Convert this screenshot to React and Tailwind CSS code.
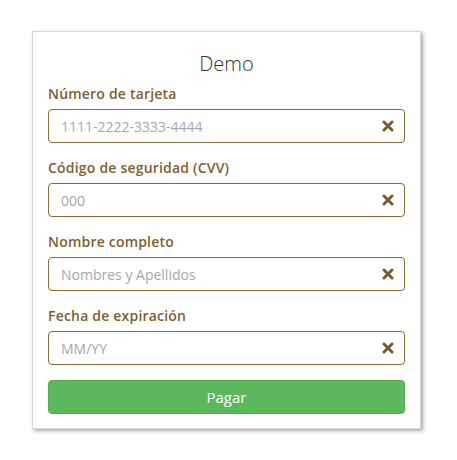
import React from 'react';

const fields = [
    { label: 'Número de tarjeta', placeholder: '1111-2222-3333-4444' },
    { label: 'Código de seguridad (CVV)', placeholder: '000' },
    { label: 'Nombre completo', placeholder: 'Nombres y Apellidos' },
    { label: 'Fecha de expiración', placeholder: 'MM/YY' },
];

const ClearIcon = () => (
    <svg width="12" height="12" viewBox="0 0 12 12" className="text-[#7a5a2a]">
        <path d="M2 2 L10 10 M10 2 L2 10" stroke="currentColor" strokeWidth="3" strokeLinecap="round" />
    </svg>
);

const Field = ({ label, placeholder }) => (
    <div className="flex flex-col">
        <label className="text-[14px] leading-5 font-semibold tracking-[0.2px] text-[#80602f] mb-[5px]">{label}</label>
        <div className="flex items-center h-[34px] border border-[#8a6a35] rounded-[4px] pl-3 pr-[10px]">
            <input
                placeholder={placeholder}
                className="flex-1 text-[14px] outline-none bg-transparent placeholder:text-[#a3a8b0] text-gray-700"
            />
            <ClearIcon />
        </div>
    </div>
);

export default function App() {
    return (
        <div className="min-h-[460px] bg-white pt-[31px] pl-[32px] pb-[30px]" style={{ fontFamily: '"Open Sans", Lato, sans-serif' }}>
            <div className="w-[389px] bg-white border border-[#d8d8d8] shadow-[2px_2px_4px_rgba(0,0,0,0.35)] px-[15px] pt-[20px] pb-[14px]">
                <h1 className="text-center text-[20px] leading-6 font-light text-[#333] mb-2">Demo</h1>
                <div className="flex flex-col gap-[15px]">
                    {fields.map(f => <Field key={f.label} {...f} />)}
                    <button className="h-[34px] rounded-[4px] bg-[#5cb85c] border border-[#4cae4c] text-white text-[15px]">
                        Pagar
                    </button>
                </div>
            </div>
        </div>
    );
}
